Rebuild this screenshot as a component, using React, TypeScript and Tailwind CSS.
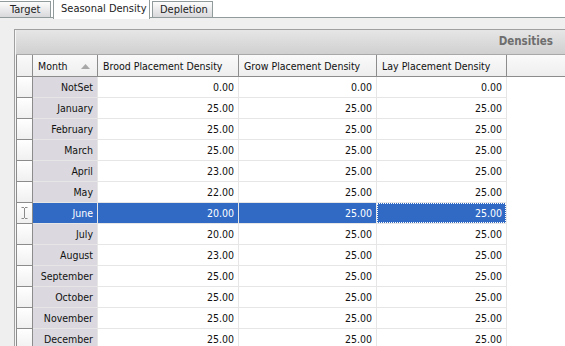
import React from 'react';

type Row = { month: string; brood: string; grow: string; lay: string };

const rows: Row[] = [
  { month: 'NotSet', brood: '0.00', grow: '0.00', lay: '0.00' },
  { month: 'January', brood: '25.00', grow: '25.00', lay: '25.00' },
  { month: 'February', brood: '25.00', grow: '25.00', lay: '25.00' },
  { month: 'March', brood: '25.00', grow: '25.00', lay: '25.00' },
  { month: 'April', brood: '23.00', grow: '25.00', lay: '25.00' },
  { month: 'May', brood: '22.00', grow: '25.00', lay: '25.00' },
  { month: 'June', brood: '20.00', grow: '25.00', lay: '25.00' },
  { month: 'July', brood: '20.00', grow: '25.00', lay: '25.00' },
  { month: 'August', brood: '23.00', grow: '25.00', lay: '25.00' },
  { month: 'September', brood: '25.00', grow: '25.00', lay: '25.00' },
  { month: 'October', brood: '25.00', grow: '25.00', lay: '25.00' },
  { month: 'November', brood: '25.00', grow: '25.00', lay: '25.00' },
  { month: 'December', brood: '25.00', grow: '25.00', lay: '25.00' },
];

const SELECTED = 6;

const IBeam = () => (
  <svg width="7" height="12" viewBox="0 0 7 12" className="block">
    <path d="M0.5 0.5h2.5M4 0.5h2.5M3.5 1v10M0.5 11.5h2.5M4 11.5h2.5" stroke="#8a8a8a" strokeWidth="1" fill="none" />
  </svg>
);

const SortUp = () => (
  <svg width="9" height="5" viewBox="0 0 9 5" className="block">
    <path d="M4.5 0L9 5H0z" fill="#a8a8a8" />
  </svg>
);

const Tabs: React.FC = () => (
  <div className="relative h-[18px] bg-white border-b border-[#919b9c] flex items-end text-[11px]">
    <div className="h-[16px] w-[51px] border-r border-t border-[#919b9c] bg-gradient-to-b from-[#fcfcfc] to-[#d9d9dc] flex items-center pl-[10px] text-[#222]">
      Target
    </div>
    <div className="ml-[2px] -mb-[2px] h-[20px] w-[97px] border-x border-t border-[#919b9c] bg-white flex items-start pt-[3px] pl-[7px] text-[#222] z-10">
      Seasonal Density
    </div>
    <div className="ml-[2px] h-[16px] w-[61px] border-x border-t border-[#919b9c] bg-gradient-to-b from-[#fcfcfc] to-[#d9d9dc] flex items-center pl-[7px] text-[#222]">
      Depletion
    </div>
  </div>
);

const App: React.FC = () => {
  return (
    <div
      className="w-[565px] h-[346px] overflow-hidden bg-[#efefef] flex flex-col text-[10.5px] leading-none text-[#111]"
      style={{ fontFamily: '"DejaVu Sans Condensed", "Liberation Sans", sans-serif' }}
    >
      <Tabs />
      <div className="flex-1 pl-[14px] pt-[11px]">
        <div className="h-full border-l border-t border-[#a0a0a0] bg-[#f6f6f6] pl-[1px] flex flex-col">
          <div className="h-[25px] shrink-0 border-b border-[#a8a8a8] bg-gradient-to-b from-[#e6e6e6] to-[#d0d0d0] flex items-center justify-end pr-[12px]">
            <span className="font-bold text-[11.5px] text-[#6e6e6e]">Densities</span>
          </div>
          <div className="flex h-[22px] shrink-0 border-b border-[#8c8c8c] bg-gradient-to-b from-[#fafafa] to-[#eeeeee]">
            <div className="w-[17px] border-x border-[#8c8c8c]" />
            <div className="w-[65px] border-r border-[#8c8c8c] flex items-center justify-between pl-[5px] pr-[7px] pt-[1px]">
              <span>Month</span>
              <SortUp />
            </div>
            <div className="w-[141px] border-r border-[#8c8c8c] flex items-center pl-[5px] pt-[1px]">Brood Placement Density</div>
            <div className="w-[138px] border-r border-[#8c8c8c] flex items-center pl-[5px] pt-[1px]">Grow Placement Density</div>
            <div className="w-[130px] border-r border-[#8c8c8c] flex items-center pl-[5px] pt-[1px]">Lay Placement Density</div>
            <div className="flex-1" />
          </div>
          {rows.map((r, i) => {
            const sel = i === SELECTED;
            return (
              <div key={r.month} className="flex h-[21px] shrink-0">
                <div className="w-[17px] border-x border-b border-[#8c8c8c] bg-gradient-to-b from-white to-[#f0f0f0] flex items-center justify-center">
                  {sel && <IBeam />}
                </div>
                <div
                  className={
                    sel
                      ? 'w-[65px] border-r border-b border-[#e6e6e6] bg-[#316ac5] text-white flex items-center justify-end pr-[4px] pt-[1px]'
                      : 'w-[65px] border-r border-b border-[#e6e6e6] bg-[#dbd9df] flex items-center justify-end pr-[4px] pt-[1px]'
                  }
                >
                  {r.month}
                </div>
                <div
                  className={
                    sel
                      ? 'w-[141px] border-r border-b border-[#e6e6e6] bg-[#316ac5] text-white flex items-center justify-end pr-[4px] pt-[1px]'
                      : 'w-[141px] border-r border-b border-[#e6e6e6] bg-white flex items-center justify-end pr-[4px] pt-[1px]'
                  }
                >
                  {r.brood}
                </div>
                <div
                  className={
                    sel
                      ? 'w-[138px] border-r border-b border-[#e6e6e6] bg-[#316ac5] text-white flex items-center justify-end pr-[4px] pt-[1px]'
                      : 'w-[138px] border-r border-b border-[#e6e6e6] bg-white flex items-center justify-end pr-[4px] pt-[1px]'
                  }
                >
                  {r.grow}
                </div>
                <div
                  className={
                    sel
                      ? 'w-[130px] border-r border-b border-[#e6e6e6] bg-[#316ac5] text-white flex items-center justify-end'
                      : 'w-[130px] border-r border-b border-[#e6e6e6] bg-white flex items-center justify-end pr-[4px] pt-[1px]'
                  }
                >
                  {sel ? (
                    <div className="h-full w-full border border-dotted border-white flex items-center justify-end pr-[3px] pt-[1px]">
                      {r.lay}
                    </div>
                  ) : (
                    r.lay
                  )}
                </div>
                <div className="flex-1 bg-white" />
              </div>
            );
          })}
        </div>
      </div>
    </div>
  );
};

export default App;
